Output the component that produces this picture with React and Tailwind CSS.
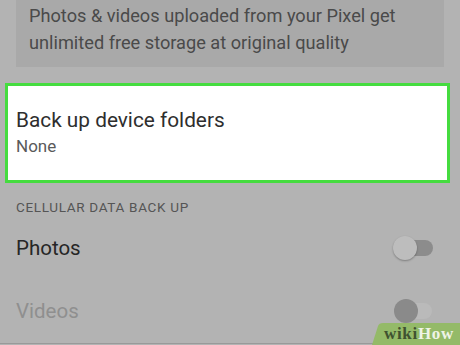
import React from "react";

export default function App() {
  return (
    <div
      className="relative w-[460px] h-[345px] overflow-hidden bg-[#b3b3b3]"
      style={{ fontFamily: "Roboto, 'Liberation Sans', sans-serif" }}
    >
      {/* top info card */}
      <div className="mx-4 h-[67px] bg-[#a9a9a9] pl-[13px] pt-[2px] text-[18.2px] leading-[27px] text-[#4a4a4a]">
        <div>Photos &amp; videos uploaded from your Pixel get</div>
        <div>unlimited free storage at original quality</div>
      </div>

      {/* highlighted row */}
      <div className="mt-4 ml-[5px] w-[445px] h-[100px] border-[3px] border-[#45dc3f] bg-white pl-[8px] pt-[22px]">
        <div className="text-[20.8px] leading-[24px] text-[#2e2e2e]">Back up device folders</div>
        <div className="mt-[4px] text-[17px] leading-[20px] text-[#5a5a5a]">None</div>
      </div>

      {/* section header */}
      <div className="mt-[16px] pl-4 text-[13.5px] leading-[16px] tracking-[0.05em] text-[#555555]">
        CELLULAR DATA BACK UP
      </div>

      {/* Photos row */}
      <div className="flex items-center justify-between h-[64px] pl-4 pr-[27px] mt-[1px]">
        <span className="text-[20.5px] leading-[24px] text-[#262626]">Photos</span>
        <div className="relative w-[40px] h-[24px]">
          <div className="absolute left-[6px] right-0 top-[4px] h-[16px] rounded-full bg-[#8c8c8c]" />
          <div className="absolute left-0 top-0 w-[24px] h-[24px] rounded-full bg-[#bdbdbd] shadow-[0_1px_2px_rgba(0,0,0,0.3)]" />
        </div>
      </div>

      {/* Videos row */}
      <div className="flex items-center justify-between h-[62px] pl-4 pr-[28px]">
        <span className="text-[20.5px] leading-[24px] text-[#8f8f8f]">Videos</span>
        <div className="relative w-[38px] h-[24px]">
          <div className="absolute left-[8px] right-0 top-[4px] h-[16px] rounded-full bg-[#bababa]" />
          <div className="absolute left-0 top-0 w-[24px] h-[24px] rounded-full bg-[#8a8a8a]" />
        </div>
      </div>

      <div className="absolute left-0 right-0 bottom-[1px] h-[1px] bg-[#999999]" />

      {/* wikiHow badge */}
      <div className="absolute right-0 bottom-0 w-[88px] h-[22px]">
        <svg className="absolute inset-0" width="88" height="22" viewBox="0 0 88 22">
          <path d="M0 22 L6 3 Q7 0 11 0 L88 0 L88 22 Z" fill="#94ba68" />
        </svg>
        <div
          className="absolute left-[12px] top-[1px] whitespace-nowrap text-[17px] leading-[20px] font-bold tracking-[0.04em]"
          style={{ fontFamily: "'Liberation Serif', serif" }}
        >
          <span className="text-[#3f5230]">wiki</span>
          <span className="text-[#eef3e6]">How</span>
        </div>
      </div>
    </div>
  );
}
